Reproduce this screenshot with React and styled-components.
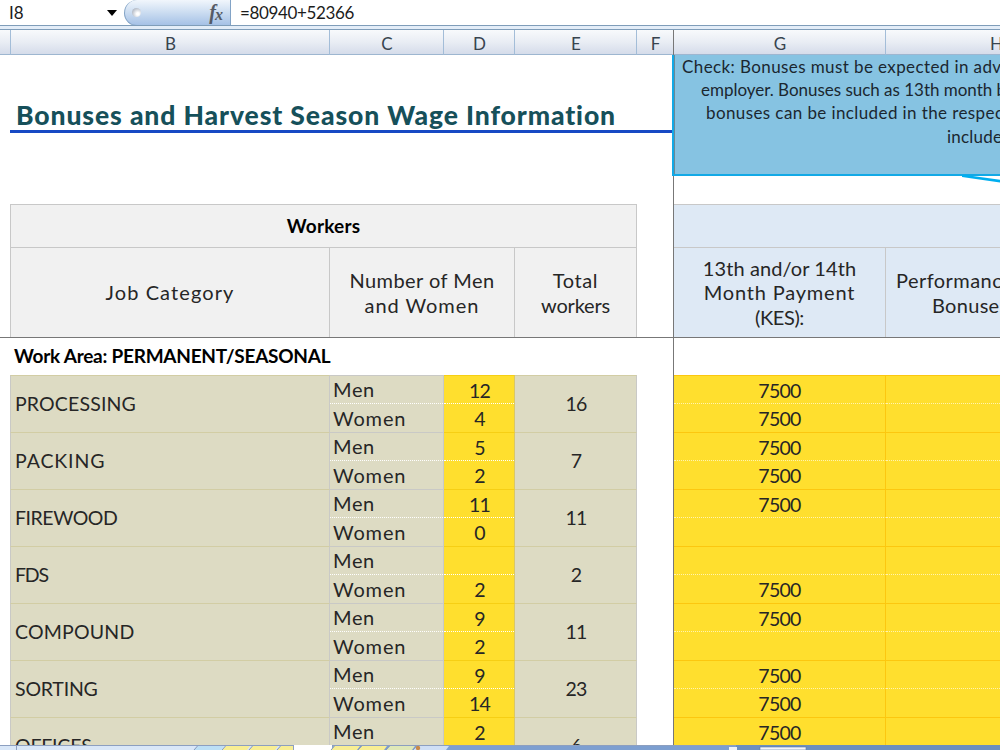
import React from "react";
import styled, { createGlobalStyle } from "styled-components";

const columns = ["B", "C", "D", "E", "F"];

const jobs = [
  { name: "PROCESSING", track: 0.15, men: "12", women: "4", total: "16", bonus: ["7500", "7500"] },
  { name: "PACKING", track: 0.9, men: "5", women: "2", total: "7", bonus: ["7500", "7500"] },
  { name: "FIREWOOD", track: -0.45, men: "11", women: "0", total: "11", bonus: ["7500", ""] },
  { name: "FDS", track: -1.2, men: "", women: "2", total: "2", bonus: ["", "7500"] },
  { name: "COMPOUND", track: 0.2, men: "9", women: "2", total: "11", bonus: ["7500", ""] },
  { name: "SORTING", track: -0.2, men: "9", women: "14", total: "23", bonus: ["7500", "7500"] },
  { name: "OFFICES", track: -0.2, men: "2", women: "", total: "6", bonus: ["7500", ""] },
];

const note = [
  { text: "Check: Bonuses must be expected in adv", indent: 8, track: 0.4 },
  { text: "employer. Bonuses such as 13th month b", indent: 27, track: -0.02 },
  { text: "bonuses can be included in the respec", indent: 32, track: 0.4 },
  { text: "include", indent: 273, track: 0.2 },
];

function App() {
  return (
    <>
      <GlobalStyle />
      <Screen>
        <FormulaBar>
          <NameBox>I8</NameBox>
          <Arrow />
          <Functions>
            <Knob />
            <Fx>
              f<sub>x</sub>
            </Fx>
          </Functions>
          <Formula>=80940+52366</Formula>
        </FormulaBar>
        <Splitter />
        <Panes>
          <LeftPane>
            <LeftHeads>
              <Head />
              {columns.map((c) => (
                <Head key={c}>{c}</Head>
              ))}
            </LeftHeads>
            <TitleRow>
              <Title>Bonuses and Harvest Season Wage Information</Title>
            </TitleRow>
            <LeftTable>
              <GroupHead>Workers</GroupHead>
              <FieldHead>
                <Text $track={1.1}>Job Category</Text>
              </FieldHead>
              <FieldHead>
                <Text $track={0.45}>Number of Men</Text>
                <Text $track={0.95}>and Women</Text>
              </FieldHead>
              <FieldHead>
                <Text $track={0.6}>Total</Text>
                <Text $track={-0.2}>workers</Text>
              </FieldHead>
            </LeftTable>
            <AreaRow>Work Area: PERMANENT/SEASONAL</AreaRow>
            <JobList>
              {jobs.map((job) => (
                <JobRow key={job.name}>
                  <JobName>
                    <Text $track={job.track}>{job.name}</Text>
                  </JobName>
                  <Split>
                    <Gender>
                      <Text $track={0.65}>Men</Text>
                    </Gender>
                    <Gender>
                      <Text $track={0.85}>Women</Text>
                    </Gender>
                  </Split>
                  <Split $yellow>
                    <Count>{job.men}</Count>
                    <Count>{job.women}</Count>
                  </Split>
                  <Total>{job.total}</Total>
                </JobRow>
              ))}
            </JobList>
          </LeftPane>
          <RightPane>
            <RightHeads>
              <Head>G</Head>
              <Head>H</Head>
            </RightHeads>
            <Blank />
            <RightTable>
              <BlueBand />
              <FieldHead>
                <Text $track={0.1}>13th and/or 14th</Text>
                <Text $track={0.8}>Month Payment</Text>
                <Text $track={-0.4}>(KES):</Text>
              </FieldHead>
              <FieldHead>
                <Clipped $indent={10} $track={0.45}>Performance</Clipped>
                <Clipped $indent={46} $track={0.3}>Bonuses</Clipped>
              </FieldHead>
            </RightTable>
            <AreaRow />
            <JobList>
              {jobs.map((job) => (
                <BonusRow key={job.name}>
                  <Bonus>{job.bonus[0]}</Bonus>
                  <Bonus />
                  <Bonus>{job.bonus[1]}</Bonus>
                  <Bonus />
                </BonusRow>
              ))}
            </JobList>
            <Callout>
              {note.map((line) => (
                <NoteLine key={line.text} $indent={line.indent} $track={line.track}>
                  {line.text}
                </NoteLine>
              ))}
            </Callout>
            <Pointer width="40" height="8" viewBox="0 0 40 8">
              <path d="M0 .8 L40 6.4" stroke="#00aeef" strokeWidth="2.6" />
            </Pointer>
          </RightPane>
        </Panes>
        <SheetBar>
          <svg width="1000" height="5" viewBox="0 0 1000 5">
            <rect width="1000" height="5" fill="#7d9fd0" />
            <rect width="294" height="5" fill="#d9e7f8" />
            <rect x="294" width="38" height="5" fill="#ffffff" />
            <path d="M0 .5H294M332 .5H1000" stroke="#8c9fc0" />
            <path d="M16.500 1V5M293.500 1V5" stroke="#8c9fc0" />
            <path d="M198 1H224L221 5H194Z" fill="#bcdff5" />
            <path d="M226 1H250L247 5H222Z" fill="#f8ee93" />
            <path d="M253 1H278L275 5H249Z" fill="#f8ee93" />
            <path d="M281 1H293V5H277Z" fill="#f8ee93" />
            <path d="M334 1H360L357 5H331Z" fill="#f8ee93" />
            <path d="M362 1H387L384 5H358Z" fill="#f8ee93" />
            <path d="M390 1H415L412 5H386Z" fill="#dfe8b8" />
            <path d="M417 1H449L446 5H413Z" fill="#cfdff5" />
            <path
              d="M194 5L197.500 1M222 5L225.500 1M249 5L252.500 1M277 5L280.500 1M331 5L334.500 1M358 5L361.500 1M386 5L389.500 1M413 5L416.500 1"
              stroke="#8499bd"
              fill="none"
            />
            <circle cx="418" cy="3" r="2.200" fill="#c98a4a" />
            <rect x="736" width="264" height="5" fill="#6c8fbe" />
            <rect x="729" y="2" width="8" height="3" fill="#eef3fa" />
            <rect x="760" y="2" width="46" height="3" fill="#f4f6fa" stroke="#5b79a5" strokeWidth=".6" />
          </svg>
        </SheetBar>
      </Screen>
    </>
  );
}

const GlobalStyle = createGlobalStyle`
  * {
    box-sizing: border-box;
  }
  body {
    margin: 0;
    overflow: hidden;
    font-family: Lato, "Open Sans", sans-serif;
    color: #262626;
    background: #fff;
  }
`;

const Screen = styled.div`
  width: 1000px;
  height: 750px;
  display: flex;
  flex-direction: column;
  overflow: hidden;
  background: #fff;
`;

const FormulaBar = styled.div`
  height: 25px;
  flex: none;
  display: flex;
  align-items: center;
  font-size: 17px;
  color: #1c1c1c;
`;

const NameBox = styled.div`
  width: 107px;
  padding-left: 9px;
  font-size: 17px;
`;

const Arrow = styled.div`
  border: 5px solid transparent;
  border-top: 6px solid #000;
  border-bottom: 0;
`;

const Functions = styled.div`
  width: 107px;
  height: 26px;
  margin-left: 7px;
  padding: 0 7px;
  display: flex;
  align-items: center;
  justify-content: space-between;
  border: 1px solid #82a3c6;
  border-top: 0;
  border-radius: 13px 0 0 13px;
  background: linear-gradient(#f1f6fc, #cfdff2 45%, #a5c1e6);
`;

const Knob = styled.div`
  width: 9px;
  height: 9px;
  border-radius: 50%;
  background: radial-gradient(circle at 65% 65%, #fff 15%, #b3bac6 75%);
`;

const Fx = styled.div`
  font: italic bold 20px/20px "Liberation Serif", serif;
  color: #555b66;
  sub {
    font-size: 16px;
    line-height: 0;
    vertical-align: -1px;
    margin-left: -1px;
  }
`;

const Formula = styled.div`
  padding-left: 9px;
  letter-spacing: -0.35px;
`;

const Splitter = styled.div`
  height: 5px;
  flex: none;
  border-top: 1px solid #7f9db9;
  border-bottom: 1px solid #7f9db9;
  background: #e3edf8;
`;

const Panes = styled.div`
  height: 715px;
  flex: none;
  display: flex;
  overflow: hidden;
`;

const LeftPane = styled.div`
  width: 673px;
  flex: none;
`;

const RightPane = styled.div`
  position: relative;
  width: 327px;
  flex: none;
  border-left: 1px solid #777;
`;

const LeftHeads = styled.div`
  display: grid;
  grid-template-columns: 11px 319px 114px 71px 122px 36px;
  height: 25px;
`;

const RightHeads = styled(LeftHeads)`
  grid-template-columns: 212px 220px;
  width: 326px;
  overflow: hidden;
`;

const Head = styled.div`
  display: flex;
  align-items: center;
  justify-content: center;
  padding: 3px 0 0 1px;
  font-size: 17px;
  color: #38444f;
  border-right: 1px solid #a3bdd8;
  border-bottom: 1px solid #9db6d0;
  background: linear-gradient(#f8fafc, #e9edf4 50%, #d5dcea);
  &:last-child {
    border-right: 0;
  }
`;

const TitleRow = styled.div`
  height: 149px;
  padding-left: 10px;
`;

const Title = styled.h1`
  height: 78px;
  margin: 0;
  padding: 43px 0 0 6px;
  border-bottom: 3px solid #1749c4;
  font-size: 26.5px;
  font-weight: 900;
  line-height: 34px;
  letter-spacing: 0.9px;
  white-space: nowrap;
  color: #16505a;
`;

const LeftTable = styled.div`
  display: grid;
  grid-template-columns: 319px 185px 122px;
  grid-template-rows: 43px 89px;
  width: 627px;
  height: 133px;
  margin-left: 10px;
  border-left: 1px solid #c8c8c8;
  border-top: 1px solid #c8c8c8;
  background: #f1f1f1;
`;

const GroupHead = styled.div`
  grid-column: 1 / -1;
  display: flex;
  align-items: center;
  justify-content: center;
  padding-bottom: 1px;
  font-size: 19px;
  font-weight: 700;
  letter-spacing: 0.2px;
  color: #000;
  border-right: 1px solid #c8c8c8;
  border-bottom: 1px solid #c8c8c8;
`;

const FieldHead = styled.div`
  display: flex;
  flex-direction: column;
  align-items: center;
  justify-content: center;
  font-size: 20px;
  line-height: 24.4px;
  border-right: 1px solid #c8c8c8;
`;

const Text = styled.span`
  white-space: nowrap;
  letter-spacing: ${({ $track }) => $track}px;
`;

const AreaRow = styled.div`
  height: 38px;
  padding-left: 14px;
  border-top: 1px solid #777;
  font-size: 19px;
  font-weight: 700;
  line-height: 36px;
  letter-spacing: -0.25px;
  color: #000;
`;

const JobList = styled.div`
  font-size: 19.5px;
`;

const JobRow = styled.div`
  display: grid;
  grid-template-columns: 320px 114px 71px 122px;
  width: 627px;
  height: 57px;
  margin-left: 10px;
  background: #dddbc3;
`;

const JobName = styled.div`
  display: flex;
  align-items: center;
  padding: 0 0 2px 4px;
  border: 1px solid #c9c9c6;
  border-bottom: 0;
  border-top-color: #d2cda4;
`;

const Split = styled.div`
  display: grid;
  grid-template-rows: 28px 28px;
  border-top: 1px solid ${({ $yellow }) => ($yellow ? "#f6cf14" : "#c9c9c6")};
  border-right: 1px solid ${({ $yellow }) => ($yellow ? "#d9c766" : "#c9c9c6")};
  background: ${({ $yellow }) => ($yellow ? "#ffdf2e" : "#dddbc3")};
  & > div:first-child {
    border-bottom: 1px dotted #fff;
  }
`;

const Gender = styled.div`
  display: flex;
  align-items: center;
  padding: 0 0 1px 3px;
  font-size: 20px;
`;

const Count = styled.div`
  display: flex;
  align-items: center;
  justify-content: center;
  padding: 1px 0 0 1px;
  letter-spacing: -0.7px;
`;

const Total = styled.div`
  display: flex;
  align-items: center;
  justify-content: center;
  padding: 0 0 2px 1px;
  letter-spacing: -0.7px;
  border-top: 1px solid #d2cda4;
  border-right: 1px solid #c9c9c6;
`;

const Blank = styled.div`
  height: 149px;
`;

const RightTable = styled.div`
  display: grid;
  grid-template-columns: 212px 220px;
  grid-template-rows: 43px 89px;
  height: 133px;
  width: 326px;
  overflow: hidden;
  border-top: 1px solid #c8c8c8;
  background: #dee9f5;
`;

const BlueBand = styled.div`
  grid-column: 1 / -1;
  border-bottom: 1px solid #c8c8c8;
`;

const Clipped = styled(Text)`
  align-self: flex-start;
  padding-left: ${({ $indent }) => $indent}px;
`;

const BonusRow = styled.div`
  display: grid;
  grid-template-columns: 212px 114px;
  grid-template-rows: 28px 28px;
  height: 57px;
  border-top: 1px solid #fcc70f;
  background: #ffdf2e;
`;

const Bonus = styled.div`
  display: flex;
  align-items: center;
  justify-content: center;
  padding-top: 1px;
  letter-spacing: -0.7px;
  &:nth-child(odd) {
    border-right: 1px solid #fcc70f;
  }
  &:nth-child(-n + 2) {
    border-bottom: 1px dotted #fff3b0;
  }
`;

const Callout = styled.div`
  position: absolute;
  left: -2px;
  top: 25px;
  width: 330px;
  height: 121px;
  overflow: hidden;
  border: 2px solid #12a9e6;
  border-width: 0 0 2px 2px;
  background: #86c3e2;
  box-shadow: inset 1px 0 #6b8896;
`;

const NoteLine = styled.div`
  height: 23.2px;
  padding-left: ${({ $indent }) => $indent}px;
  font-size: 17px;
  line-height: 24px;
  letter-spacing: ${({ $track }) => $track}px;
  white-space: nowrap;
  color: #1b2730;
`;

const Pointer = styled.svg`
  position: absolute;
  left: 288px;
  top: 145px;
`;

const SheetBar = styled.div`
  height: 5px;
  flex: none;
  overflow: hidden;
  svg {
    display: block;
  }
`;

export default App;
